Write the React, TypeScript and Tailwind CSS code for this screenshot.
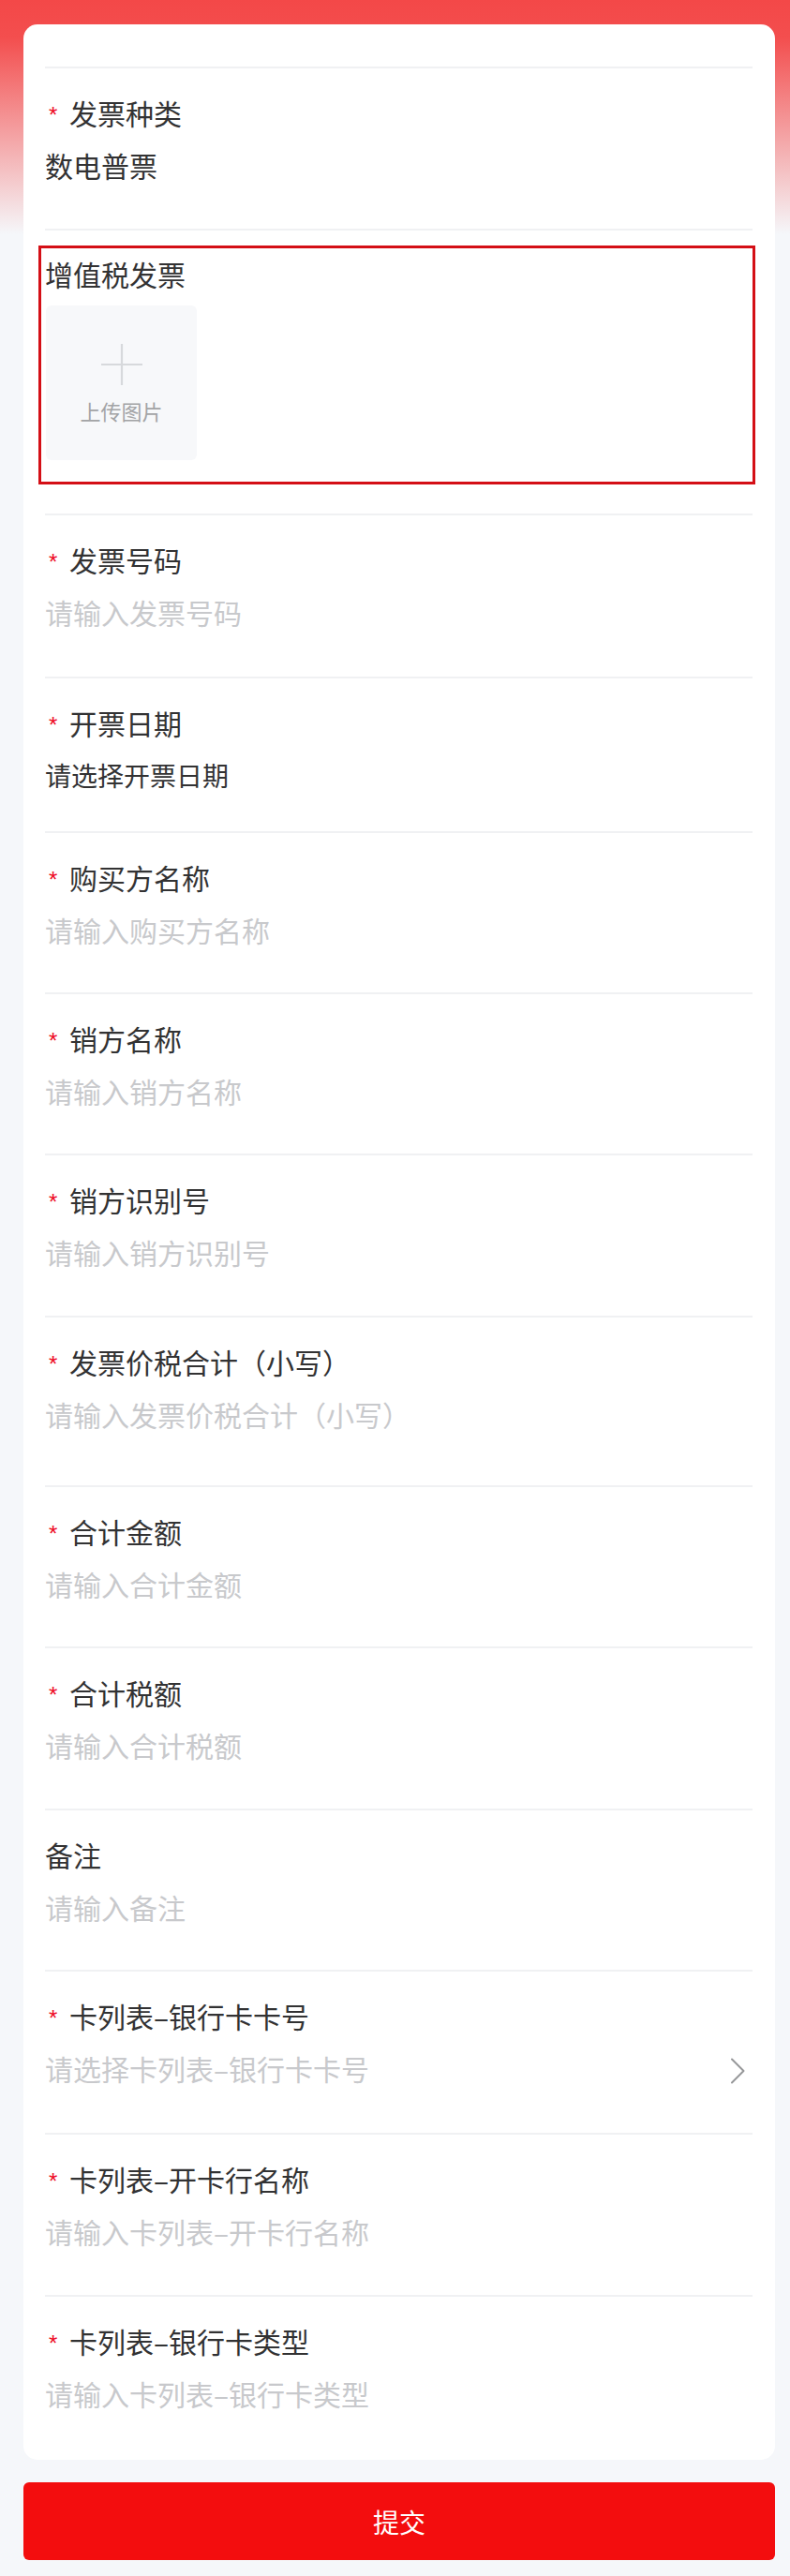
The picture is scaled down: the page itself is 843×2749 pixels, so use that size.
import React from "react";

type Row =
  | { kind: "field"; label: string; req: boolean; text: string; tone: "value30" | "value28" | "ph"; arrow?: boolean; pb: string }
  | { kind: "upload" };

const rows: Row[] = [
  { kind: "field", label: "发票种类", req: true, text: "数电普票", tone: "value30", pb: "pb-[48px]" },
  { kind: "upload" },
  { kind: "field", label: "发票号码", req: true, text: "请输入发票号码", tone: "ph", pb: "pb-[49px]" },
  { kind: "field", label: "开票日期", req: true, text: "请选择开票日期", tone: "value28", pb: "pb-[40px]" },
  { kind: "field", label: "购买方名称", req: true, text: "请输入购买方名称", tone: "ph", pb: "pb-[47px]" },
  { kind: "field", label: "销方名称", req: true, text: "请输入销方名称", tone: "ph", pb: "pb-[47px]" },
  { kind: "field", label: "销方识别号", req: true, text: "请输入销方识别号", tone: "ph", pb: "pb-[48px]" },
  { kind: "field", label: "发票价税合计（小写）", req: true, text: "请输入发票价税合计（小写）", tone: "ph", pb: "pb-[56px]" },
  { kind: "field", label: "合计金额", req: true, text: "请输入合计金额", tone: "ph", pb: "pb-[47px]" },
  { kind: "field", label: "合计税额", req: true, text: "请输入合计税额", tone: "ph", pb: "pb-[48px]" },
  { kind: "field", label: "备注", req: false, text: "请输入备注", tone: "ph", pb: "pb-[47px]" },
  { kind: "field", label: "卡列表–银行卡卡号", req: true, text: "请选择卡列表–银行卡卡号", tone: "ph", arrow: true, pb: "pb-[49px]" },
  { kind: "field", label: "卡列表–开卡行名称", req: true, text: "请输入卡列表–开卡行名称", tone: "ph", pb: "pb-[48px]" },
  { kind: "field", label: "卡列表–银行卡类型", req: true, text: "请输入卡列表–银行卡类型", tone: "ph", pb: "pb-[51px]" },
];

const font = { fontFamily: '"Noto Sans CJK SC", "Noto Sans", sans-serif' };

function Label({ label, req }: { label: string; req: boolean }) {
  return (
    <div className="flex h-[40px] items-center text-[30px] leading-[40px] text-[#323233]">
      {req ? (
        <span
          className="mt-[6px] inline-block w-[26px] pl-[4px] text-[24px] leading-[24px] text-[#ee0a24]"
          style={{ fontFamily: '"Liberation Sans", Arial, sans-serif' }}
        >
          *
        </span>
      ) : null}
      <span>{label}</span>
    </div>
  );
}

function Chevron() {
  return (
    <svg width="18" height="30" viewBox="0 0 18 30" fill="none" className="shrink-0">
      <path d="M3 2.5 L15.5 15 L3 27.5" stroke="#969799" strokeWidth="2" strokeLinecap="round" strokeLinejoin="round" />
    </svg>
  );
}

function FieldRow({ row }: { row: Extract<Row, { kind: "field" }> }) {
  const toneCls =
    row.tone === "ph"
      ? "text-[30px] text-[#c8c9cc]"
      : row.tone === "value30"
      ? "text-[30px] text-[#323233]"
      : "text-[28px] text-[#323233]";
  return (
    <div className={`border-t-2 border-[#f0f1f3] pt-[27px] ${row.pb}`}>
      <Label label={row.label} req={row.req} />
      <div className="mt-[16px] flex h-[40px] items-center pr-[7px]">
        <span className={`leading-[40px] ${toneCls}`}>{row.text}</span>
        {row.arrow ? (
          <span className="ml-auto flex items-center pt-[6px]">
            <Chevron />
          </span>
        ) : null}
      </div>
    </div>
  );
}

function UploadRow() {
  return (
    <div className="border-t-2 border-[#f0f1f3] pt-[16px] pb-[31px]">
      <div className="ml-[-7px] mr-[-3px] border-[3px] border-[#d40f16] pl-[4px] pt-[7px] pb-[23px]">
        <div className="h-[40px] text-[30px] leading-[40px] text-[#323233]">增值税发票</div>
        <div className="mt-[14px] ml-[1px] flex h-[165px] w-[161px] flex-col items-center justify-center rounded-[6px] bg-[#f7f8fa]">
          <svg width="46" height="46" viewBox="0 0 46 46" fill="none">
            <path d="M23 1 V45 M1 23 H45" stroke="#d7d9dc" strokeWidth="2.2" />
          </svg>
          <div className="mt-[13px] text-[22px] leading-[26px] text-[#a3a4a6]">上传图片</div>
        </div>
      </div>
    </div>
  );
}

export default function App() {
  return (
    <div
      className="min-h-[2749px] w-full bg-[#f5f7fa] bg-[linear-gradient(180deg,#f34848_0px,#f34e4e_40px,#f5f7fa_250px)] pt-[26px] pb-[17px]"
      style={font}
    >
      <div className="ml-[25px] w-[802px] rounded-[15px] bg-white pt-[45px] pl-[23px] pr-[24px]">
        {rows.map((r, i) =>
          r.kind === "upload" ? <UploadRow key={i} /> : <FieldRow key={i} row={r} />
        )}
      </div>
      <button className="mt-[24px] ml-[25px] flex h-[83px] w-[802px] items-center justify-center rounded-[6px] bg-[#f30d0e] text-[28px] text-white">
        提交
      </button>
    </div>
  );
}
